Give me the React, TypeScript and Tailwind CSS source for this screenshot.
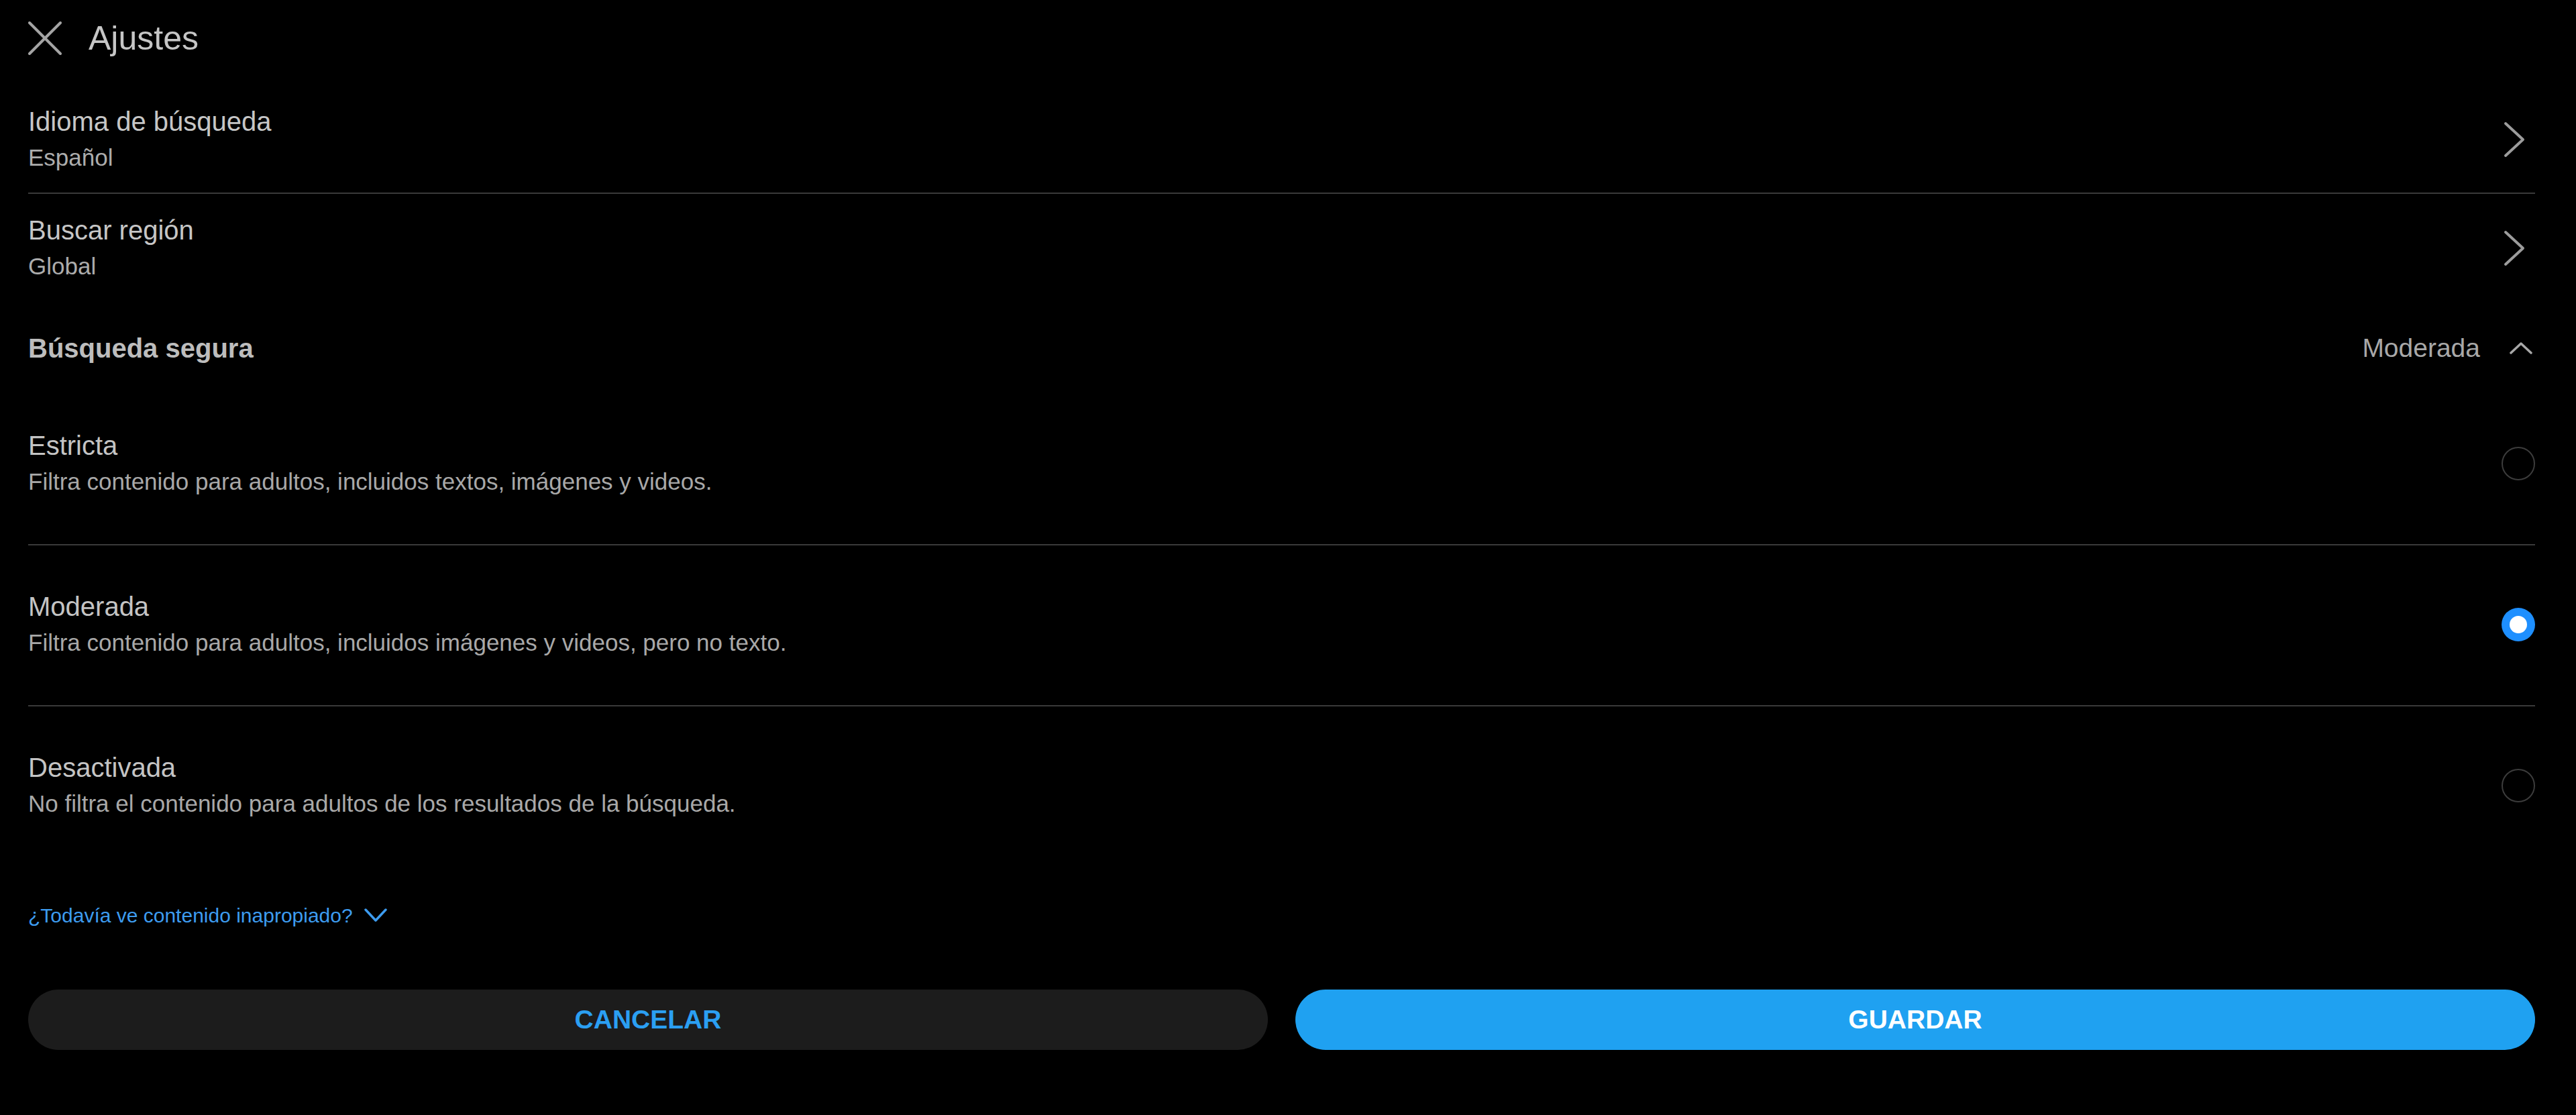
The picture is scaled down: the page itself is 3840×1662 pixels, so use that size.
import React from "react";

const font = { fontFamily: '"Liberation Sans", Arial, sans-serif' };

function ChevronRight() {
  return (
    <svg width="34" height="54" viewBox="0 0 34 54" className="mr-[14px] shrink-0">
      <polyline points="4,3 30,27 4,51" fill="none" stroke="#9c9c9c" strokeWidth="4" strokeLinecap="round" strokeLinejoin="round" />
    </svg>
  );
}

function Radio({ checked }: { checked?: boolean }) {
  if (checked) {
    return (
      <div className="w-[50px] h-[50px] rounded-full bg-[#1e8fff] flex items-center justify-center shrink-0">
        <div className="w-[26px] h-[26px] rounded-full bg-white" />
      </div>
    );
  }
  return <div className="w-[50px] h-[50px] rounded-full border-2 border-[#3c3c3c] shrink-0" />;
}

function Option({ title, desc, checked, first, last }: { title: string; desc: string; checked?: boolean; first?: boolean; last?: boolean }) {
  return (
    <div className={`flex items-center justify-between ${first ? "" : "pt-[64px]"} ${last ? "" : "pb-[66px] border-b-2 border-[#3a3a3a]"}`}>
      <div className="flex flex-col">
        <div className="text-[40px] leading-[54px] text-[#c4c4c4]">{title}</div>
        <div className="text-[35px] leading-[54px] text-[#a8a8a8]">{desc}</div>
      </div>
      <Radio checked={checked} />
    </div>
  );
}

export default function App() {
  return (
    <div className="min-h-screen w-full bg-black pl-[42px] pr-[61px]" style={font}>
      <div className="h-[114px] flex items-center gap-[40px]">
        <svg width="50" height="50" viewBox="0 0 50 50" className="shrink-0">
          <line x1="2" y1="2" x2="48" y2="48" stroke="#a4a4a4" strokeWidth="4" strokeLinecap="round" />
          <line x1="48" y1="2" x2="2" y2="48" stroke="#a4a4a4" strokeWidth="4" strokeLinecap="round" />
        </svg>
        <div className="text-[50px] leading-[60px] text-[#c6c6c6]">Ajustes</div>
      </div>

      <div className="flex items-center justify-between pt-[40px] pb-[25px] border-b-2 border-[#3a3a3a]">
        <div className="flex flex-col">
          <div className="text-[40px] leading-[54px] text-[#c6c6c6]">Idioma de búsqueda</div>
          <div className="text-[35px] leading-[54px] text-[#acacac]">Español</div>
        </div>
        <ChevronRight />
      </div>

      <div className="flex items-center justify-between pt-[27px]">
        <div className="flex flex-col">
          <div className="text-[40px] leading-[54px] text-[#c6c6c6]">Buscar región</div>
          <div className="text-[35px] leading-[54px] text-[#acacac]">Global</div>
        </div>
        <ChevronRight />
      </div>

      <div className="mt-[68px] h-[54px] flex items-center justify-between">
        <div className="text-[40px] font-bold text-[#bdbdbd]">Búsqueda segura</div>
        <div className="flex items-center gap-[44px] pr-[4px]">
          <div className="text-[39px] text-[#a8a8a8]">Moderada</div>
          <svg width="34" height="20" viewBox="0 0 34 20">
            <polyline points="2,17 17,3 32,17" fill="none" stroke="#a8a8a8" strokeWidth="3.5" strokeLinecap="round" strokeLinejoin="round" />
          </svg>
        </div>
      </div>

      <div className="mt-[91px] flex flex-col">
        <Option first title="Estricta" desc="Filtra contenido para adultos, incluidos textos, imágenes y videos." />
        <Option checked title="Moderada" desc="Filtra contenido para adultos, incluidos imágenes y videos, pero no texto." />
        <Option last title="Desactivada" desc="No filtra el contenido para adultos de los resultados de la búsqueda." />
      </div>

      <div className="mt-[119px] h-[40px] flex items-center gap-[17px] text-[30px] text-[#3d9cf0]">
        <span>¿Todavía ve contenido inapropiado?</span>
        <svg width="34" height="22" viewBox="0 0 34 22">
          <polyline points="2,3 17,19 32,3" fill="none" stroke="#3d9cf0" strokeWidth="3.5" strokeLinecap="round" strokeLinejoin="round" />
        </svg>
      </div>

      <div className="mt-[91px] flex gap-[41px]">
        <button className="flex-1 h-[90px] rounded-full bg-[#1c1c1c] text-[39px] font-bold text-[#2b9ff2]">CANCELAR</button>
        <button className="flex-1 h-[90px] rounded-full bg-[#1fa1f1] text-[39px] font-bold text-white">GUARDAR</button>
      </div>
    </div>
  );
}
